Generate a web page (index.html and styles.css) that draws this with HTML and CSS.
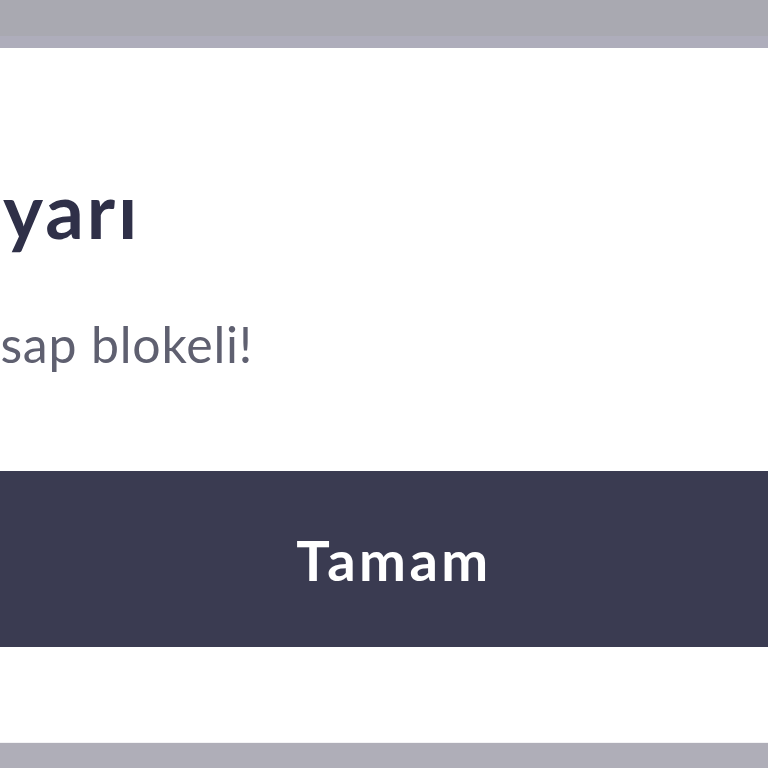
FILE: index.html
```html
<!DOCTYPE html>
<html lang="tr">
  <head>
    <meta charset="UTF-8" />
    <title>Uyarı</title>
    <link rel="stylesheet" href="styles.css">
  </head>
  <body>
    <div class="backdrop-top"></div>
    <div class="dialog">
      <h1 class="dialog-title">Uyarı</h1>
      <p class="dialog-text">Hesap blokeli!</p>
      <button type="button" class="dialog-button">Tamam</button>
    </div>
    <div class="backdrop-bottom"></div>
  </body>
</html>
```

FILE: styles.css
```css
body {
    margin: 0;
    padding: 0;
    background-color: #afaeb8;
    font-family: Lato, "Noto Sans", sans-serif;
    height: 100vh;
    overflow: hidden;
    display: flex;
    flex-direction: column;
}
.backdrop-top {
    height: 36px;
    flex-shrink: 0;
    background-color: #a9a9b1;
    border-bottom: 12px solid #aeadbb;
}
.dialog {
    background-color: #fff;
    width: 1008px;
    height: 695px;
    flex-shrink: 0;
    margin-left: -110px; /* dialog wider than the screen, cropped */
    padding: 122px 0 0 47px;
    box-sizing: border-box;
    display: flex;
    flex-direction: column;
    border-bottom: 1px solid #f3f3f5;
}
.dialog-title {
    margin: 0 0 0 7px;
    font-size: 76px;
    line-height: 80px;
    font-weight: 700;
    letter-spacing: 3px;
    color: #2f3048;
}
.dialog-text {
    margin: 66px 0 0 -2px;
    font-size: 50px;
    line-height: 56px;
    font-weight: 400;
    letter-spacing: 0.8px;
    color: #5f6070;
}
.dialog-button {
    margin: 99px 0 0 -47px;
    width: 1008px;
    height: 176px;
    border: none;
    background-color: #3a3b51;
    color: #fff;
    font-family: Lato, "Noto Sans", sans-serif;
    font-size: 56px;
    font-weight: 700;
    letter-spacing: 3.5px;
    cursor: pointer;
}
```
